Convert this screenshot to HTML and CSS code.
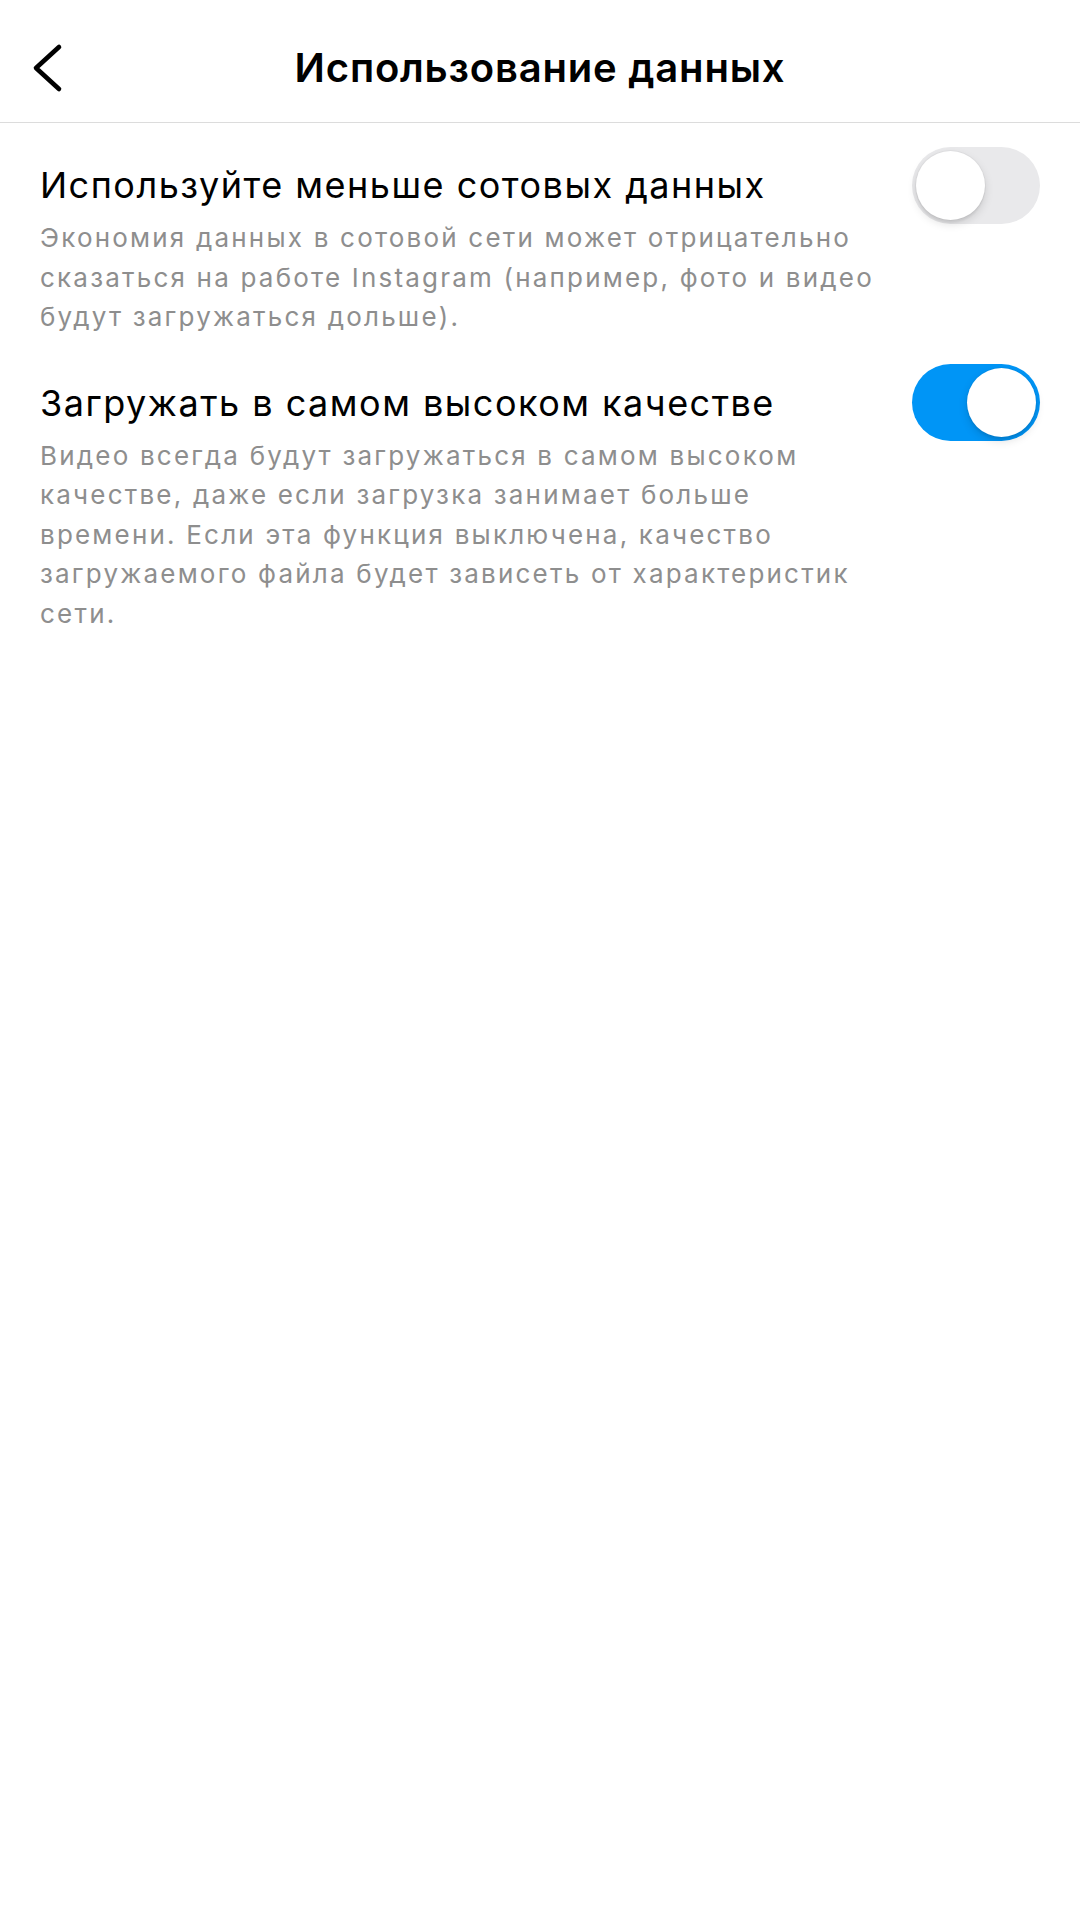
FILE: index.html
```html
<!DOCTYPE html>
<html lang="ru">
<head>
<meta charset="utf-8">
<title>Использование данных</title>
<link rel="stylesheet" href="styles.css">
</head>
<body>
<header class="topbar">
  <div class="topbar-left">
    <svg class="back" width="34" height="52" viewBox="0 0 34 52" aria-label="Назад">
      <path d="M29 5 L6 26 L29 47" fill="none" stroke="#000" stroke-width="4.6" stroke-linecap="round" stroke-linejoin="round"/>
    </svg>
  </div>
  <h1 class="topbar-title">Использование данных</h1>
  <div class="topbar-right"></div>
</header>
<main class="settings">
  <section class="setting">
    <div class="setting-head">
      <span class="setting-title">Используйте меньше сотовых данных</span>
      <span class="switch" role="switch" aria-checked="false"><span class="thumb"></span></span>
    </div>
    <p class="setting-desc">Экономия данных в сотовой сети может отрицательно<br>сказаться на работе Instagram (например, фото и видео<br>будут загружаться дольше).</p>
  </section>
  <section class="setting">
    <div class="setting-head">
      <span class="setting-title">Загружать в самом высоком качестве</span>
      <span class="switch on" role="switch" aria-checked="true"><span class="thumb"></span></span>
    </div>
    <p class="setting-desc">Видео всегда будут загружаться в самом высоком<br>качестве, даже если загрузка занимает больше<br>времени. Если эта функция выключена, качество<br>загружаемого файла будет зависеть от характеристик<br>сети.</p>
  </section>
</main>
</body>
</html>
```
FILE: styles.css
```css
html, body {
  margin: 0;
  padding: 0;
  background: #fff;
}
body {
  width: 1080px;
  min-height: 1920px;
  font-family: Inter, "Noto Sans", "Liberation Sans", sans-serif;
  color: #000;
}
.topbar {
  display: grid;
  grid-template-columns: 1fr auto 1fr;
  align-items: center;
  box-sizing: border-box;
  height: 123px;
  padding-top: 14px;
  border-bottom: 1.5px solid #dcdcdc;
}
.topbar-left {
  display: flex;
  align-items: center;
  padding-left: 30px;
}
.back {
  display: block;
}
.topbar-title {
  margin: 0;
  font-size: 40px;
  font-weight: 600;
  line-height: 48px;
  letter-spacing: 0.8px;
  text-align: center;
}
.settings {
  display: flex;
  flex-direction: column;
  gap: 42px;
  padding: 38px 40px 0 40px;
}
.setting-head {
  display: flex;
  align-items: center;
  justify-content: space-between;
  height: 48px;
}
.setting-title {
  font-size: 36px;
  line-height: 48px;
  font-weight: 400;
  letter-spacing: 1.5px;
  white-space: nowrap;
}
.setting-desc {
  margin: 9px 0 0 0;
  font-size: 26px;
  line-height: 39.5px;
  letter-spacing: 2.2px;
  color: #8e8e8e;
  white-space: nowrap;
}
.switch {
  display: flex;
  align-items: center;
  justify-content: flex-start;
  box-sizing: border-box;
  flex: 0 0 auto;
  width: 128px;
  height: 77px;
  padding: 4px;
  border-radius: 39px;
  background: #e9e9eb;
}
.switch.on {
  justify-content: flex-end;
  background: #0095f6;
}
.thumb {
  display: block;
  width: 69px;
  height: 69px;
  border-radius: 50%;
  background: #fff;
  box-shadow: 0 4px 10px rgba(0, 0, 0, 0.13), 0 3px 2px rgba(0, 0, 0, 0.05), 0 0 0 1px rgba(0, 0, 0, 0.03);
}
```
